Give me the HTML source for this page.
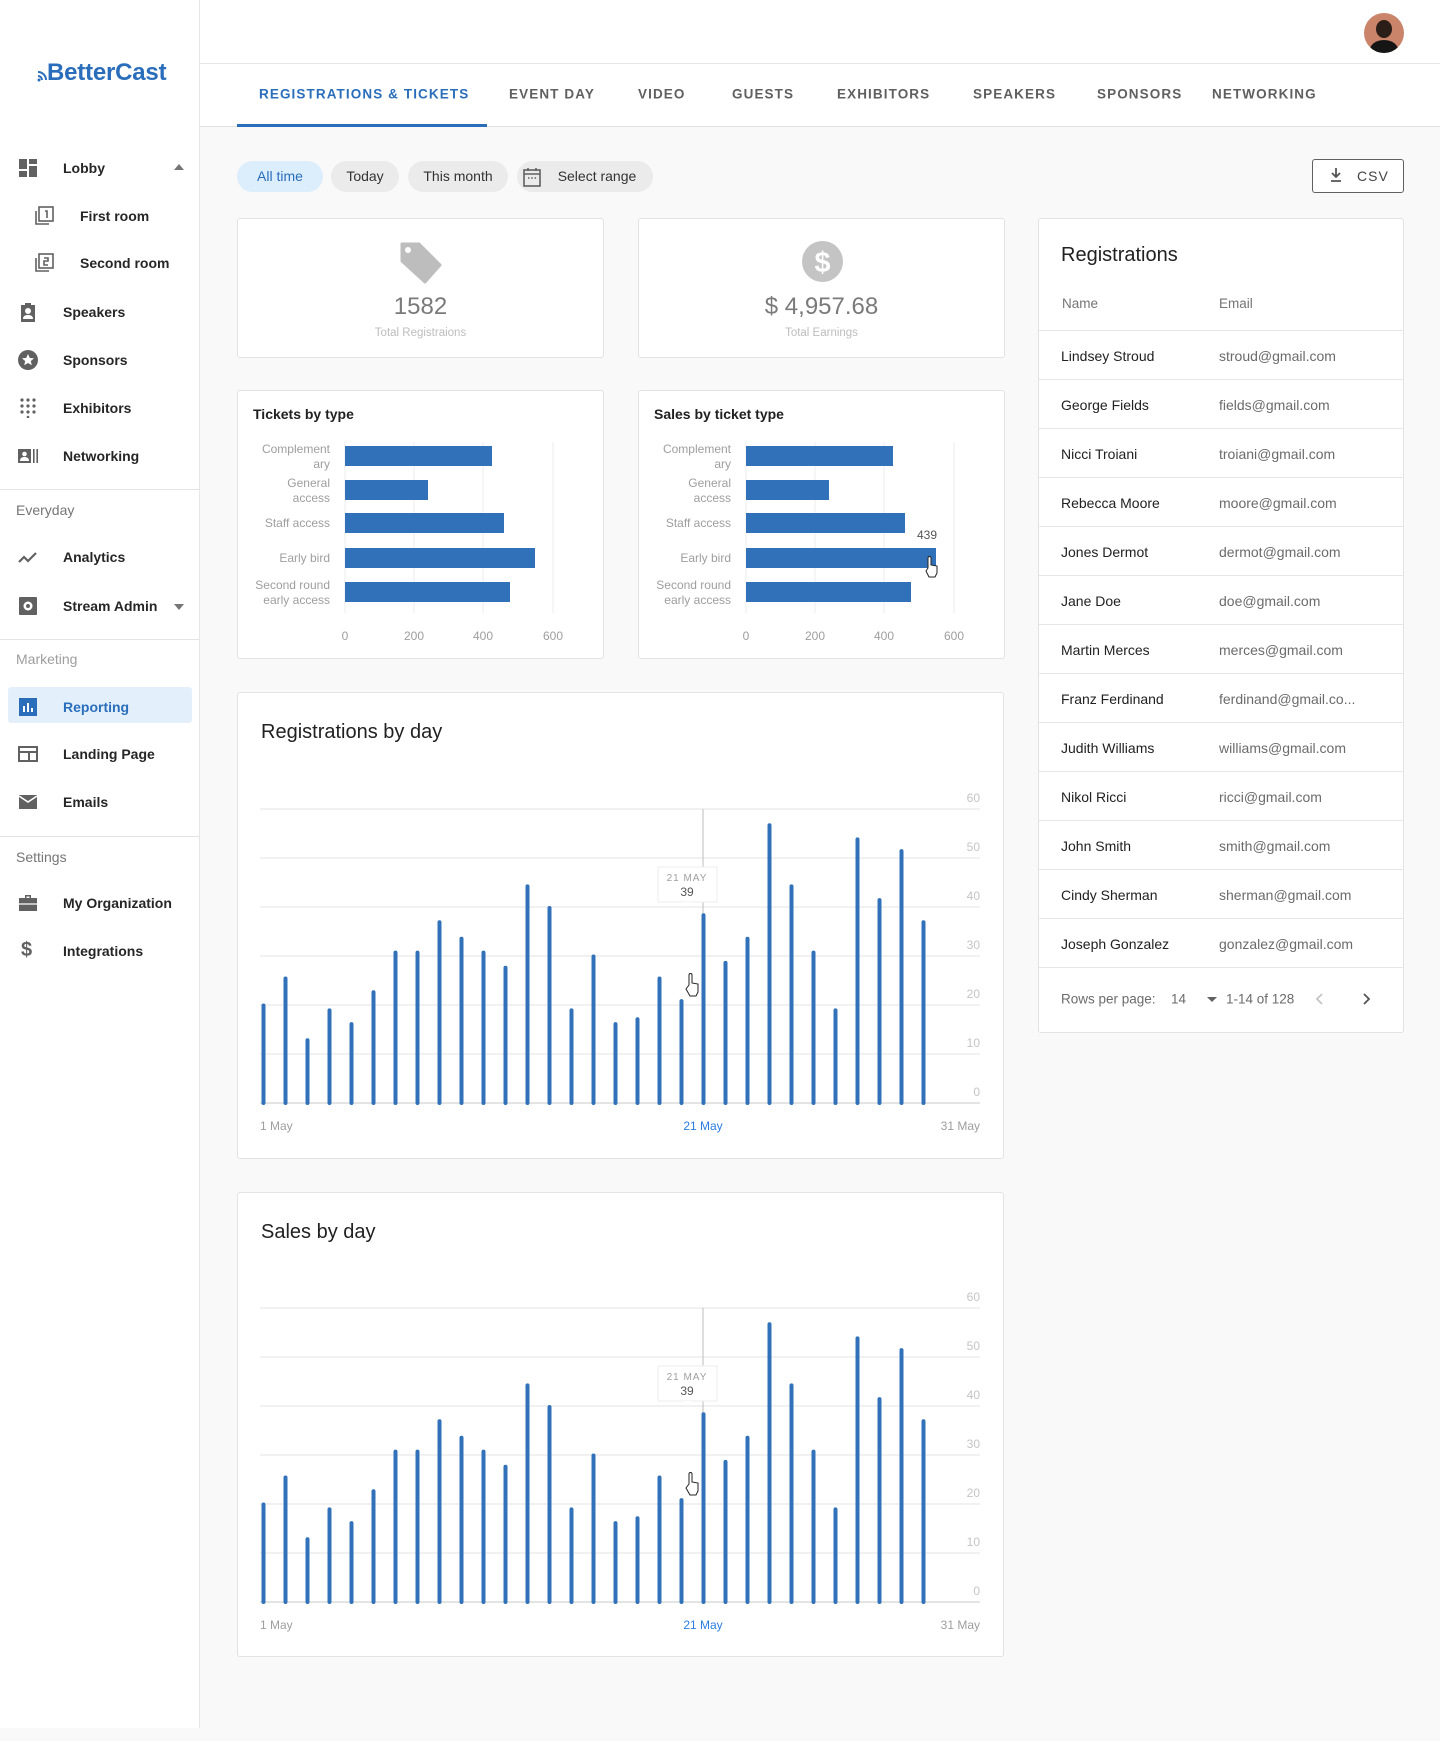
<!DOCTYPE html>
<html><head><meta charset="utf-8">
<style>
*{box-sizing:border-box;margin:0;padding:0}
body{width:1440px;height:1741px;background:#f9f9f9;font-family:"Liberation Sans",Arial,sans-serif;position:relative;overflow:hidden;color:#212121}
.abs{position:absolute}
#side{position:absolute;left:0;top:0;width:200px;height:1728px;background:#fff;border-right:1px solid #e6e6e6}
.it{position:absolute;left:63px;font-size:14px;font-weight:bold;color:#262626;transform:translateY(-50%)}
.ic{position:absolute;left:18px;width:20px;height:20px;transform:translateY(-50%)}
.sec{position:absolute;left:16px;font-size:14px;color:#757575;transform:translateY(-50%)}
.hr{position:absolute;left:0;width:199px;height:1px;background:#e3e3e3}
#top{position:absolute;left:200px;top:0;width:1240px;height:127px;background:#fff;border-bottom:1px solid #e3e3e3}
.tab{position:absolute;top:94px;font-size:13.5px;letter-spacing:1.1px;font-weight:bold;color:#5f5f5f;transform:translateY(-50%)}
.chip{position:absolute;top:161px;height:31px;border-radius:16px;background:#ebebeb;font-size:14px;color:#333;line-height:31px;text-align:center}
.card{position:absolute;background:#fff;border:1px solid #e3e3e3;border-radius:3px}
.stn{position:absolute;left:0;right:0;text-align:center;font-size:24px;color:#7a7a7a}
.stl{position:absolute;left:0;right:0;text-align:center;font-size:11.5px;color:#bdbdbd}
.ct{position:absolute;font-size:14px;font-weight:bold;color:#212121}
.big{position:absolute;font-size:20px;color:#212121}
.tr{position:absolute;left:1038px;width:366px;height:1px;background:#e6e6e6}
.nm{position:absolute;left:1061px;font-size:14px;color:#212121;transform:translateY(-50%)}
.em{position:absolute;left:1219px;font-size:14px;color:#6b6b6b;transform:translateY(-50%)}
</style></head><body>

<div id="side">
  <svg class="abs" style="left:37px;top:64px" width="14" height="20" viewBox="0 0 14 20"><g fill="none" stroke="#2a6ebb" stroke-width="2"><path d="M1 8a8 8 0 0 1 8 8"/><path d="M1 12a4 4 0 0 1 4 4"/></g><circle cx="2" cy="16" r="1.5" fill="#2a6ebb"/></svg>
  <div class="abs" style="left:47px;top:59px;font-size:24px;font-weight:bold;color:#2a6ebb;letter-spacing:-0.2px">BetterCast</div>

  <svg class="ic" style="top:168px" viewBox="0 0 20 20"><path fill="#616161" d="M1 1h8v10H1zM11 1h8v5h-8zM11 8h8v11h-8zM1 13h8v6H1z"/></svg>
  <div class="it" style="top:168px">Lobby</div>
  <svg class="abs" style="left:174px;top:164px" width="10" height="6"><path d="M0 6L5 0L10 6Z" fill="#757575"/></svg>

  <svg class="ic" style="left:33px;top:216px;width:22px;height:22px" viewBox="0 0 22 22"><g fill="none" stroke="#616161" stroke-width="1.6"><rect x="6" y="2" width="14" height="14"/><path d="M3 6v13h13"/><path d="M12 6h2v7"/></g></svg>
  <div class="it" style="left:80px;top:216px">First room</div>
  <svg class="ic" style="left:33px;top:263px;width:22px;height:22px" viewBox="0 0 22 22"><g fill="none" stroke="#616161" stroke-width="1.6"><rect x="6" y="2" width="14" height="14"/><path d="M3 6v13h13"/><path d="M11 6h4v3h-4v4h4"/></g></svg>
  <div class="it" style="left:80px;top:263px">Second room</div>

  <svg class="ic" style="top:312px" viewBox="0 0 20 20"><path fill="#616161" d="M3 3h4V1h6v2h4v17H3z"/><circle cx="10" cy="9" r="3" fill="#fff"/><path d="M5 17c0-3 2-4 5-4s5 1 5 4z" fill="#fff"/></svg>
  <div class="it" style="top:312px">Speakers</div>
  <svg class="ic" style="top:360px" viewBox="0 0 20 20"><circle cx="10" cy="10" r="10" fill="#616161"/><path d="M10 4l1.8 4 4.2.3-3.2 2.8 1 4.2L10 13l-3.8 2.3 1-4.2L4 8.3 8.2 8z" fill="#fff"/></svg>
  <div class="it" style="top:360px">Sponsors</div>
  <svg class="ic" style="top:408px" viewBox="0 0 20 20"><g fill="#616161"><circle cx="4" cy="2" r="1.6"/><circle cx="10" cy="2" r="1.6"/><circle cx="16" cy="2" r="1.6"/><circle cx="4" cy="8" r="1.6"/><circle cx="10" cy="8" r="1.6"/><circle cx="16" cy="8" r="1.6"/><circle cx="4" cy="14" r="1.6"/><circle cx="10" cy="14" r="1.6"/><circle cx="16" cy="14" r="1.6"/><circle cx="10" cy="19" r="1.3"/></g></svg>
  <div class="it" style="top:408px">Exhibitors</div>
  <svg class="ic" style="top:456px" viewBox="0 0 20 20"><path fill="#616161" d="M0 3h13v14H0zM15 3h1.6v14H15zM18.4 3H20v14h-1.6z"/><circle cx="6.5" cy="8" r="2.3" fill="#fff"/><path d="M2 15c0-3 2-4 4.5-4s4.5 1 4.5 4z" fill="#fff"/></svg>
  <div class="it" style="top:456px">Networking</div>

  <div class="hr" style="top:489px"></div>
  <div class="sec" style="top:510px">Everyday</div>
  <svg class="ic" style="top:557px" viewBox="0 0 20 20"><path d="M1 15l5-5 4 4 8-8" fill="none" stroke="#616161" stroke-width="2.2"/></svg>
  <div class="it" style="top:557px">Analytics</div>
  <svg class="ic" style="top:606px" viewBox="0 0 20 20"><rect x="1" y="1" width="18" height="18" rx="1" fill="#616161"/><circle cx="10" cy="10" r="4.5" fill="#fff"/><circle cx="10" cy="10" r="2" fill="#616161"/></svg>
  <div class="it" style="top:606px">Stream Admin</div>
  <svg class="abs" style="left:174px;top:604px" width="10" height="6"><path d="M0 0L5 6L10 0Z" fill="#757575"/></svg>

  <div class="hr" style="top:639px"></div>
  <div class="sec" style="top:659px;color:#9e9e9e">Marketing</div>
  <div class="abs" style="left:8px;top:687px;width:184px;height:36px;background:#e3f0fc;border-radius:3px"></div>
  <svg class="ic" style="top:707px" viewBox="0 0 20 20"><rect x="1" y="1" width="18" height="18" fill="#2a6ebb"/><path fill="#fff" d="M5 9h2v6H5zM9 6h2v9H9zM13 11h2v4h-2z"/></svg>
  <div class="it" style="top:707px;color:#2a6ebb">Reporting</div>
  <svg class="ic" style="top:754px" viewBox="0 0 20 20"><path fill="none" stroke="#616161" stroke-width="2" d="M1 3h18v14H1zM1 8h18M11 8v9"/></svg>
  <div class="it" style="top:754px">Landing Page</div>
  <svg class="ic" style="top:802px" viewBox="0 0 20 20"><rect x="1" y="3" width="18" height="14" fill="#616161"/><path d="M1 4l9 6 9-6" fill="none" stroke="#fff" stroke-width="1.6"/></svg>
  <div class="it" style="top:802px">Emails</div>

  <div class="hr" style="top:836px"></div>
  <div class="sec" style="top:857px">Settings</div>
  <svg class="ic" style="top:903px" viewBox="0 0 20 20"><path fill="#616161" d="M7 2h6v3h6v13H1V5h6zM8.5 3.5V5h3V3.5z"/><path d="M1 11h18" stroke="#fff" stroke-width="1.2"/></svg>
  <div class="it" style="top:903px">My Organization</div>
  <div class="abs" style="left:21px;top:939px;font-size:20px;color:#616161;font-weight:bold">$</div>
  <div class="it" style="top:951px">Integrations</div>
</div>

<div id="top">
  <div class="abs" style="left:1164px;top:13px;width:40px;height:40px;border-radius:50%;background:#c98469;overflow:hidden">
    <div class="abs" style="left:12px;top:7px;width:16px;height:18px;border-radius:50%;background:#2b1d18"></div>
    <div class="abs" style="left:6px;top:27px;width:28px;height:20px;border-radius:50%;background:#151515"></div>
  </div>
  <div class="abs" style="left:0;top:63px;width:1240px;height:1px;background:#e6e6e6"></div>
  <div class="tab" style="left:59px;color:#2a6ebb">REGISTRATIONS &amp; TICKETS</div>
  <div class="abs" style="left:37px;top:124px;width:250px;height:3px;background:#2a6ebb"></div>
  <div class="tab" style="left:309px">EVENT DAY</div>
  <div class="tab" style="left:438px">VIDEO</div>
  <div class="tab" style="left:532px">GUESTS</div>
  <div class="tab" style="left:637px">EXHIBITORS</div>
  <div class="tab" style="left:773px">SPEAKERS</div>
  <div class="tab" style="left:897px">SPONSORS</div>
  <div class="tab" style="left:1012px">NETWORKING</div>
</div>

<div class="chip" style="left:237px;width:86px;background:#dcedfc;color:#2a6ebb">All time</div>
<div class="chip" style="left:331px;width:68px">Today</div>
<div class="chip" style="left:408px;width:100px">This month</div>
<div class="chip" style="left:517px;width:136px;padding-left:24px">Select range</div>
<svg class="abs" style="left:523px;top:167px" width="18" height="20" viewBox="0 0 18 20"><g fill="none" stroke="#616161" stroke-width="1.6"><rect x="1" y="3" width="16" height="16"/><path d="M1 7h16M5 1v3M13 1v3"/></g><path d="M5 11h1.5M8.3 11h1.5M11.6 11h1.5" stroke="#616161" stroke-width="1.4"/></svg>
<div class="abs" style="left:1312px;top:159px;width:92px;height:34px;border:1px solid #616161;border-radius:3px;background:#fff;font-size:14px;letter-spacing:1px;color:#444;line-height:32px;padding-left:44px">CSV</div>
<svg class="abs" style="left:1330px;top:168px" width="12" height="14" viewBox="0 0 12 14"><path d="M6 0v8M2 5l4 4 4-4M1 13h10" fill="none" stroke="#555" stroke-width="1.8"/></svg>

<div class="card" style="left:237px;top:218px;width:367px;height:140px">
  <svg class="abs" style="left:161px;top:22px" width="44" height="44" viewBox="0 0 44 44"><path d="M3 3h17l21 21-15 17L3 20z" fill="#bdbdbd" stroke="#bdbdbd" stroke-width="3" stroke-linejoin="round"/><circle cx="9" cy="9" r="3" fill="#fff"/></svg>
  <div class="stn" style="top:74px">1582</div>
  <div class="stl" style="top:108px">Total Registraions</div>
</div>
<div class="card" style="left:638px;top:218px;width:367px;height:140px">
  <svg class="abs" style="left:163px;top:22px" width="41" height="41" viewBox="0 0 40 40"><circle cx="20" cy="20" r="20" fill="#c4c4c4"/><text x="20" y="30" text-anchor="middle" font-family="Liberation Sans" font-weight="bold" font-size="28" fill="#fff">$</text></svg>
  <div class="stn" style="top:74px">$ 4,957.68</div>
  <div class="stl" style="top:108px">Total Earnings</div>
</div>

<div class="card" style="left:237px;top:390px;width:367px;height:269px"><div class="ct" style="left:15px;top:15px">Tickets by type</div></div>
<div class="card" style="left:638px;top:390px;width:367px;height:269px"><div class="ct" style="left:15px;top:15px">Sales by ticket type</div></div>
<div class="card" style="left:237px;top:692px;width:767px;height:467px"><div class="big" style="left:23px;top:28px">Registrations by day</div></div>
<div class="card" style="left:237px;top:1192px;width:767px;height:465px"><div class="big" style="left:23px;top:28px">Sales by day</div></div>

<div class="card" style="left:1038px;top:218px;width:366px;height:815px">
  <div class="big" style="left:22px;top:25px">Registrations</div>
</div>
<div class="abs" style="left:1062px;top:296px;font-size:13.5px;color:#757575">Name</div>
<div class="abs" style="left:1219px;top:296px;font-size:13.5px;color:#757575">Email</div>
<div class="tr" style="top:330px"></div>
<div class="tr" style="top:379px"></div><div class="tr" style="top:428px"></div><div class="tr" style="top:477px"></div><div class="tr" style="top:526px"></div><div class="tr" style="top:575px"></div><div class="tr" style="top:624px"></div><div class="tr" style="top:673px"></div><div class="tr" style="top:722px"></div><div class="tr" style="top:771px"></div><div class="tr" style="top:820px"></div><div class="tr" style="top:869px"></div><div class="tr" style="top:918px"></div><div class="tr" style="top:967px"></div>
<div class="nm" style="top:356px">Lindsey Stroud</div><div class="em" style="top:356px">stroud@gmail.com</div>
<div class="nm" style="top:405px">George Fields</div><div class="em" style="top:405px">fields@gmail.com</div>
<div class="nm" style="top:454px">Nicci Troiani</div><div class="em" style="top:454px">troiani@gmail.com</div>
<div class="nm" style="top:503px">Rebecca Moore</div><div class="em" style="top:503px">moore@gmail.com</div>
<div class="nm" style="top:552px">Jones Dermot</div><div class="em" style="top:552px">dermot@gmail.com</div>
<div class="nm" style="top:601px">Jane Doe</div><div class="em" style="top:601px">doe@gmail.com</div>
<div class="nm" style="top:650px">Martin Merces</div><div class="em" style="top:650px">merces@gmail.com</div>
<div class="nm" style="top:699px">Franz Ferdinand</div><div class="em" style="top:699px">ferdinand@gmail.co...</div>
<div class="nm" style="top:748px">Judith Williams</div><div class="em" style="top:748px">williams@gmail.com</div>
<div class="nm" style="top:797px">Nikol Ricci</div><div class="em" style="top:797px">ricci@gmail.com</div>
<div class="nm" style="top:846px">John Smith</div><div class="em" style="top:846px">smith@gmail.com</div>
<div class="nm" style="top:895px">Cindy Sherman</div><div class="em" style="top:895px">sherman@gmail.com</div>
<div class="nm" style="top:944px">Joseph Gonzalez</div><div class="em" style="top:944px">gonzalez@gmail.com</div>
<div class="em" style="left:1061px;top:999px;font-size:13.5px">Rows per page:</div>
<div class="em" style="left:1171px;top:999px;font-size:13.5px">14</div>
<svg class="abs" style="left:1207px;top:997px" width="10" height="5"><path d="M0 0h10L5 5z" fill="#616161"/></svg>
<div class="em" style="left:1226px;top:999px;font-size:13.5px">1-14 of 128</div>
<svg class="abs" style="left:1315px;top:993px" width="8" height="12"><path d="M7 1L2 6l5 5" fill="none" stroke="#c4c4c4" stroke-width="1.8"/></svg>
<svg class="abs" style="left:1363px;top:993px" width="8" height="12"><path d="M1 1l5 5-5 5" fill="none" stroke="#555" stroke-width="1.8"/></svg>

<svg class="abs" style="left:0;top:0" width="1440" height="1741" font-family="Liberation Sans, Arial, sans-serif">
  <defs>
    <g id="hb">
      <g stroke="#ececec" stroke-width="1"><path d="M345 442V613M414 442V613M483 442V613M553 442V613"/></g>
      <g fill="#3171b9">
        <rect x="345" y="446" width="147" height="20"/><rect x="345" y="480" width="83" height="20"/><rect x="345" y="513" width="159" height="20"/><rect x="345" y="548" width="190" height="20"/><rect x="345" y="582" width="165" height="20"/>
      </g>
      <g fill="#9e9e9e" font-size="12" text-anchor="end">
        <text x="330" y="453">Complement</text><text x="330" y="468">ary</text>
        <text x="330" y="487">General</text><text x="330" y="502">access</text>
        <text x="330" y="527">Staff access</text>
        <text x="330" y="562">Early bird</text>
        <text x="330" y="589">Second round</text><text x="330" y="604">early access</text>
      </g>
      <g fill="#9e9e9e" font-size="12" text-anchor="middle">
        <text x="345" y="640">0</text><text x="414" y="640">200</text><text x="483" y="640">400</text><text x="553" y="640">600</text>
      </g>
    </g>
    <g id="db">
      <g stroke="#e3e3e3" stroke-width="1"><path d="M260 809H980M260 858H980M260 907H980M260 956H980M260 1005H980M260 1054H980"/></g>
      <path d="M260 1103H980" stroke="#dcdcdc" stroke-width="1.5"/>
      <path d="M703 809V1103" stroke="#bdbdbd" stroke-width="1"/>
      <g fill="#c4c4c4" font-size="12" text-anchor="end">
        <text x="980" y="802">60</text><text x="980" y="851">50</text><text x="980" y="900">40</text><text x="980" y="949">30</text><text x="980" y="998">20</text><text x="980" y="1047">10</text><text x="980" y="1096">0</text>
      </g>
      <g stroke="#3171b9" stroke-width="4" stroke-linecap="round">
        <path d="M263.5 1103V1005.5M285.5 1103V978.5M307.5 1103V1040.3M329.5 1103V1010.4M351.5 1103V1024.1M373.5 1103V992.3M395.5 1103V952.6M417.5 1103V952.6M439.5 1103V922.2M461.5 1103V938.8M483.5 1103V952.6M505.5 1103V967.8M527.5 1103V886.4M549.5 1103V908M571.5 1103V1010.4M593.5 1103V956.5M615.5 1103V1024.1M637.5 1103V1019.2M659.5 1103V978.5M681.5 1103V1001.1M703.5 1103V915.3M725.5 1103V962.9M747.5 1103V938.8M769.5 1103V825.2M791.5 1103V886.4M813.5 1103V952.6M835.5 1103V1010.4M857.5 1103V839.4M879.5 1103V900.1M901.5 1103V851.1M923.5 1103V922.2"/>
      </g>
      <g font-size="12">
        <text x="260" y="1130" fill="#9e9e9e">1 May</text>
        <text x="703" y="1130" fill="#2a7de1" text-anchor="middle">21 May</text>
        <text x="980" y="1130" fill="#9e9e9e" text-anchor="end">31 May</text>
      </g>
      <rect x="658" y="867" width="59" height="35" fill="#fff" stroke="#eee"/>
      <path d="M683 902l4 5 4-5z" fill="#fff"/>
      <text x="687" y="881" font-size="10" fill="#9e9e9e" letter-spacing="1" text-anchor="middle">21 MAY</text>
      <text x="687" y="896" font-size="12" fill="#555" text-anchor="middle">39</text>
      <path d="M689 985v-10a1.5 1.5 0 0 1 3 0v8l6 1v8l-2 4h-6l-4-7z" fill="#fff" stroke="#222" stroke-width="1"/>
    </g>
  </defs>
  <use href="#hb"/>
  <use href="#hb" transform="translate(401,0)"/>
  <rect x="908" y="523" width="38" height="23" fill="#fff"/>
  <text x="927" y="539" font-size="12" fill="#555" text-anchor="middle">439</text>
  <path d="M928 568v-10a1.5 1.5 0 0 1 3 0v7l6 1v7l-2 4h-6l-3-6z" fill="#fff" stroke="#222" stroke-width="1"/>
  <use href="#db"/>
  <use href="#db" transform="translate(0,499)"/>
</svg>
</body></html>
